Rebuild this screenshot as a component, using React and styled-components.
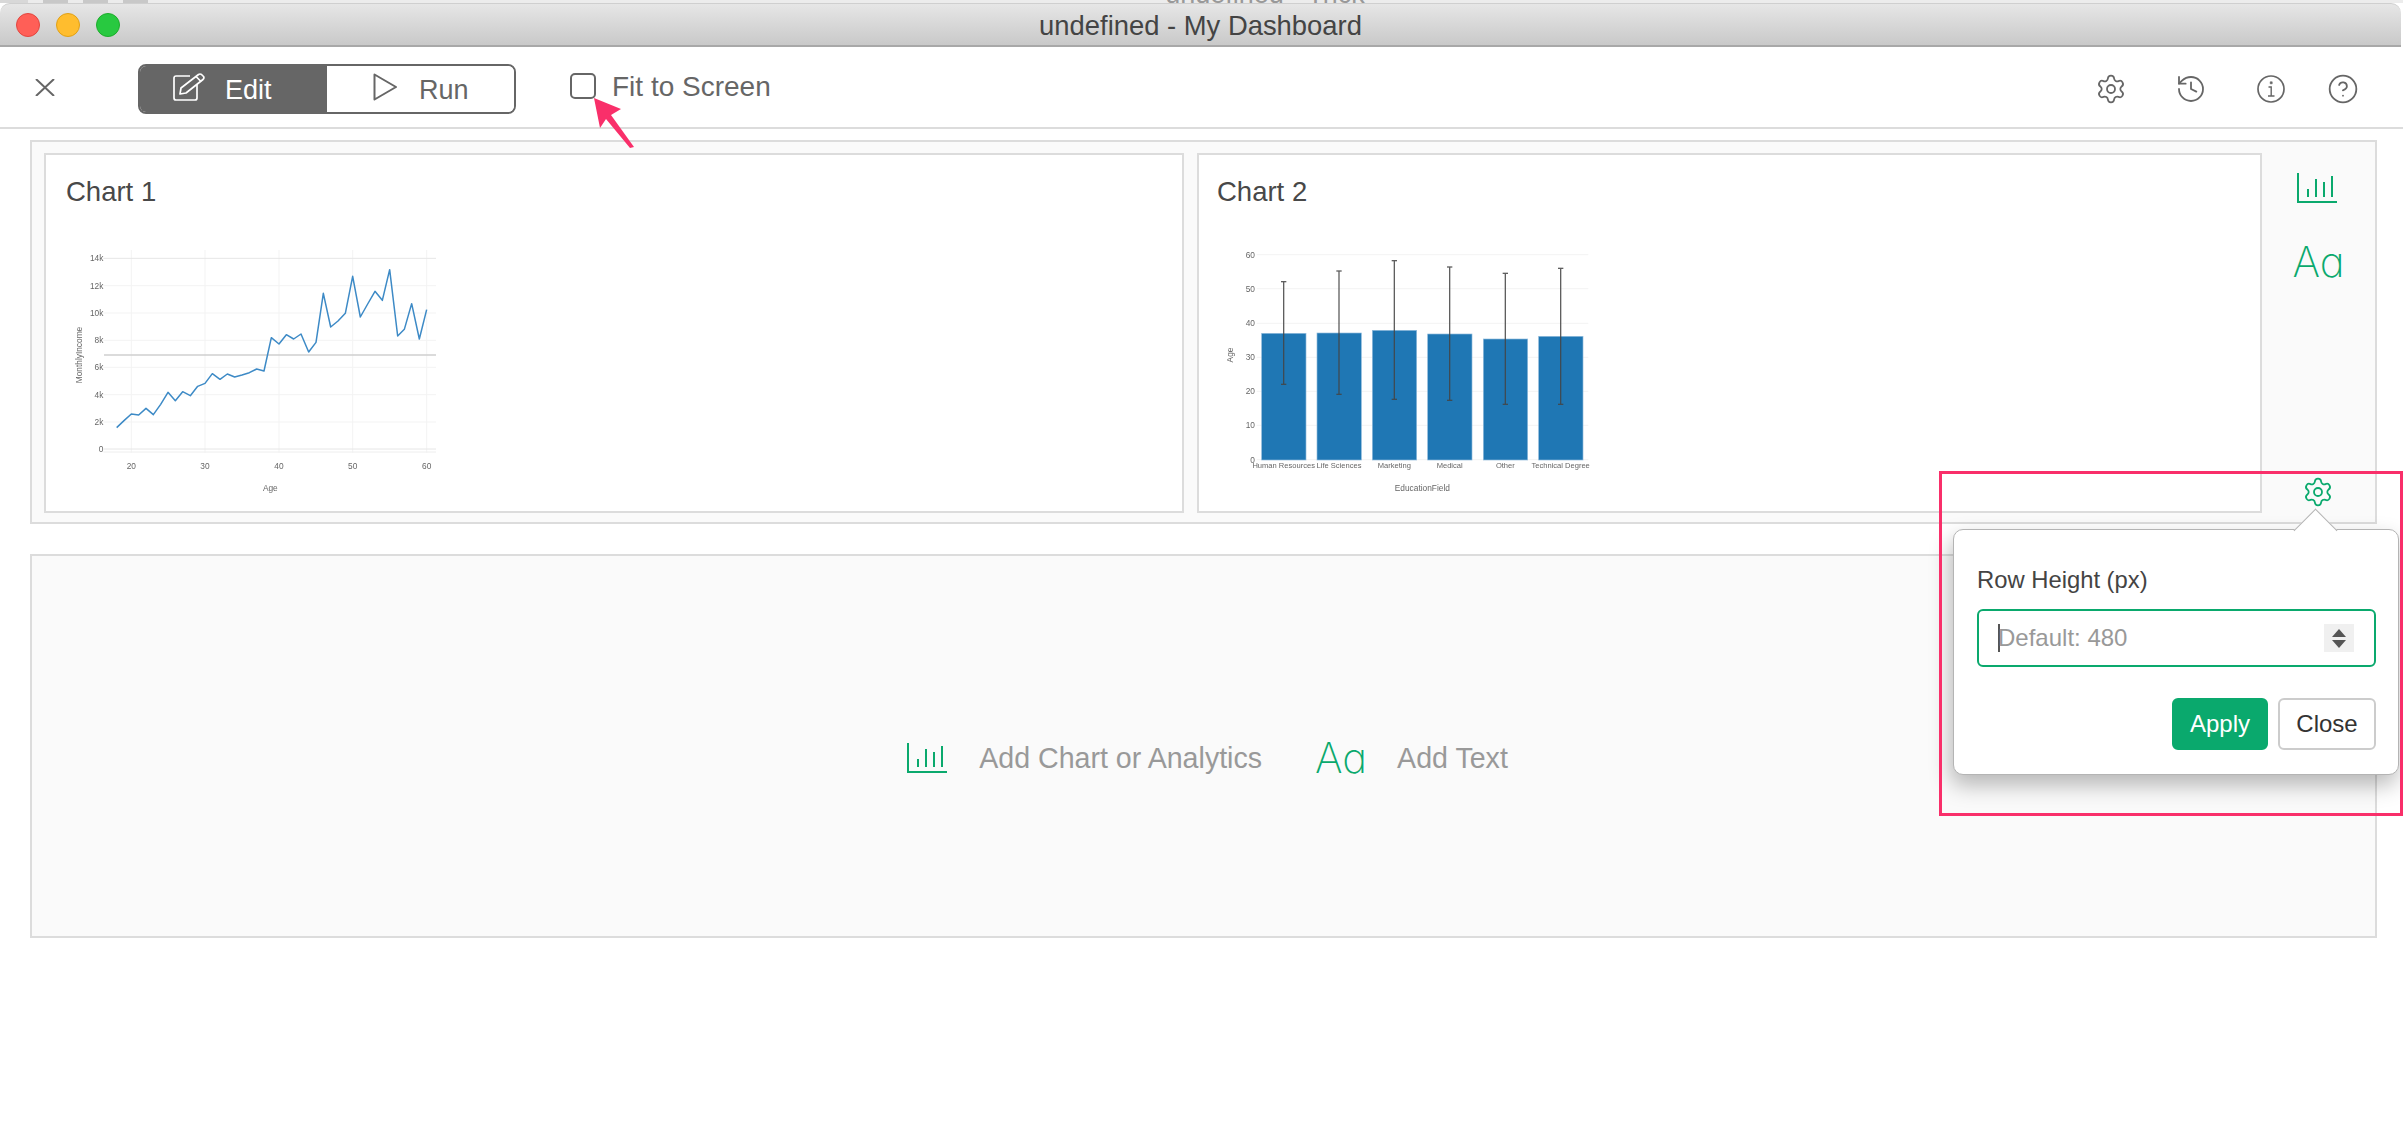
import React from 'react';
import styled, { createGlobalStyle } from 'styled-components';
import { Settings, History, CircleHelp } from 'lucide-react';

const GREEN = '#0aa96d';
const PINK = '#f92f6a';
const LINE = '#dcdcdc';

const GlobalStyle = createGlobalStyle`
  html, body {
    margin: 0;
    background: #fff;
    font-family: "Liberation Sans", Arial, sans-serif;
  }
`;

const Page = styled.div`
  position: relative;
  width: 2403px;
  height: 1124px;
  overflow: hidden;
  background: #fff;
`;

const BackWindow = styled.div`
  height: 3px;
  overflow: hidden;
  display: flex;
  justify-content: center;
  align-items: flex-end;
  padding-left: 127px;
  background: linear-gradient(
    to right,
    #d8d8d8 28px,
    #ececec 28px 43px,
    #c8c8c8 43px 68px,
    #ececec 68px 83px,
    #c8c8c8 83px 108px,
    #ececec 108px 123px,
    #c8c8c8 123px 148px,
    #ececec 148px
  );
`;

const BackTitle = styled.span`
  font-size: 27px;
  line-height: 27px;
  color: #999;
  margin-bottom: -5px;
`;

const TitleBar = styled.div`
  height: 44px;
  box-sizing: border-box;
  display: grid;
  grid-template-columns: 1fr auto 1fr;
  align-items: center;
  padding: 0 16px;
  background: linear-gradient(#e6e6e6, #c9c9c9);
  border-top: 1px solid #cfcfcf;
  border-bottom: 2px solid #a8a8a8;
  border-radius: 10px 10px 0 0;
  margin-right: 2px;
`;

const Lights = styled.div`
  display: flex;
  gap: 16px;
`;

const Light = styled.span`
  width: 24px;
  height: 24px;
  border-radius: 50%;
  box-sizing: border-box;
  background: ${(props) => props.color};
  border: 1px solid ${(props) => props.edge};
`;

const WindowTitle = styled.div`
  font-size: 27.4px;
  color: #444;
  margin-top: 3px;
`;

const Toolbar = styled.div`
  height: 82px;
  box-sizing: border-box;
  display: flex;
  align-items: center;
  padding: 3px 44px 0 35px;
  border-bottom: 2px solid ${LINE};
`;

const CloseIcon = styled.svg`
  width: 20px;
  height: 17px;
  margin: -2px 83px 0 0;
`;

const Segment = styled.div`
  width: 378px;
  height: 50px;
  box-sizing: border-box;
  display: flex;
  border: 2px solid #666;
  border-radius: 8px;
  overflow: hidden;
  margin-right: 54px;
`;

const SegmentTab = styled.div`
  display: flex;
  align-items: center;
  box-sizing: border-box;
  width: 188px;
  padding-left: ${(props) => (props.$active ? '33px' : '46px')};
  gap: ${(props) => (props.$active ? '20px' : '22px')};
  background: ${(props) => (props.$active ? '#666' : '#fff')};
  color: ${(props) => (props.$active ? '#fff' : '#666')};
  font-size: 27px;
`;

const TabGlyph = styled.svg`
  margin-top: -3px;
  flex: none;
`;

const TabLabel = styled.span`
  margin-top: 4px;
`;

const FitOption = styled.label`
  position: relative;
  display: flex;
  align-items: center;
  gap: 16px;
  font-size: 28px;
  color: #666;
  margin-top: -4px;
`;

const CheckBox = styled.span`
  width: 26px;
  height: 26px;
  box-sizing: border-box;
  border: 2px solid #666;
  border-radius: 5px;
  margin-top: -2px;
`;

const CalloutArrow = styled.svg`
  position: absolute;
  left: 20px;
  top: 25px;
  width: 50px;
  height: 60px;
`;

const ToolbarIcons = styled.div`
  margin-left: auto;
  display: flex;
  align-items: center;
  color: #666;

  & > svg {
    margin-left: 48px;
  }

  & > svg:last-child {
    margin-left: 40px;
  }
`;

const Content = styled.div`
  display: flex;
  flex-direction: column;
  gap: 30px;
  padding: 11px 26px 0 30px;
`;

const RowBox = styled.div`
  height: 384px;
  box-sizing: border-box;
  border: 2px solid ${LINE};
  background: #fafafa;
`;

const ChartRow = styled(RowBox)`
  display: flex;
  gap: 13px;
  padding: 11px 0 9px 12px;
`;

const ChartCard = styled.div`
  width: ${(props) => props.$width}px;
  flex: none;
  box-sizing: border-box;
  border: 2px solid ${LINE};
  background: #fff;
  padding: 21px 0 0 ${(props) => props.$padLeft}px;
`;

const ChartTitle = styled.div`
  font-size: 27.5px;
  line-height: 32px;
  color: #484848;
`;

const ChartPicture = styled.svg`
  display: block;
  width: ${(props) => props.$w}px;
  height: 272px;
  margin: 22px 0 0 ${(props) => props.$shift}px;
  filter: blur(0.35px);
  font-family: "Liberation Sans", Arial, sans-serif;
`;

const SideTools = styled.div`
  flex: 1;
  display: flex;
  flex-direction: column;
  align-items: center;
  margin-left: -13px;
  padding: 20px 4px 0 0;
`;

const BarsIcon = styled.svg`
  width: 40px;
  height: 30px;
  display: block;
  flex: none;
`;

const AaMark = styled.span`
  font-family: Inter, "Liberation Sans", sans-serif;
  font-feature-settings: 'cv11';
  font-weight: 250;
  font-size: 42px;
  line-height: 34px;
  color: ${GREEN};
`;

const SideAa = styled(AaMark)`
  margin: 42px 0 0 4px;
`;

const RowGear = styled.div`
  margin: auto 0 5px 2px;
  display: flex;
  color: ${GREEN};
`;

const EmptyRow = styled(RowBox)`
  display: flex;
  align-items: center;
  justify-content: center;
  padding: 24px 0 0 8px;
  font-size: 28.6px;
  color: #999;
`;

const AddLabel = styled.span`
  margin: ${(props) => (props.$last ? '0 0 0 30px' : '0 53px 0 32px')};
`;

const Popover = styled.div`
  position: absolute;
  left: 1953px;
  top: 529px;
  width: 446px;
  box-sizing: border-box;
  padding: 37px 22px 24px 23px;
  background: #fff;
  border: 1px solid #b4b4b4;
  border-radius: 10px;
  box-shadow: -2px 10px 22px rgba(0, 0, 0, 0.28);

  &::before {
    content: '';
    position: absolute;
    left: 346px;
    top: -15px;
    width: 30px;
    height: 30px;
    background: #fff;
    border-top: 1px solid #b4b4b4;
    border-left: 1px solid #b4b4b4;
    transform: rotate(45deg);
  }
`;

const FieldLabel = styled.div`
  font-size: 23.8px;
  line-height: 26px;
  color: #444;
  margin-bottom: 16px;
`;

const Field = styled.div`
  height: 58px;
  box-sizing: border-box;
  display: flex;
  align-items: center;
  border: 2px solid ${GREEN};
  border-radius: 6px;
  padding: 0 20px 0 19px;
  margin-bottom: 31px;
`;

const Caret = styled.span`
  width: 2px;
  height: 28px;
  background: #555;
  flex: none;
`;

const NumberInput = styled.input`
  flex: 1;
  min-width: 0;
  border: none;
  outline: none;
  padding: 0;
  margin-left: -2px;
  font-family: inherit;
  font-size: 24px;
  color: #333;
  background: transparent;

  &::placeholder {
    color: #999;
    opacity: 1;
  }
`;

const Spinner = styled.div`
  width: 30px;
  height: 28px;
  flex: none;
  display: flex;
  flex-direction: column;
  align-items: center;
  justify-content: center;
  gap: 3px;
  background: #f0f0f0;
`;

const SpinArrow = styled.span`
  width: 0;
  height: 0;
  border-left: 7px solid transparent;
  border-right: 7px solid transparent;
  border-bottom: ${(props) => (props.$down ? 'none' : '8px solid #555')};
  border-top: ${(props) => (props.$down ? '8px solid #555' : 'none')};
`;

const PopoverActions = styled.div`
  display: flex;
  justify-content: flex-end;
  gap: 10px;
`;

const PopoverButton = styled.button`
  height: 52px;
  box-sizing: border-box;
  font-family: inherit;
  font-size: 24px;
  border-radius: 6px;
  padding: 0;
  width: ${(props) => (props.$primary ? '96px' : '98px')};
  color: ${(props) => (props.$primary ? '#fff' : '#333')};
  background: ${(props) => (props.$primary ? GREEN : '#fff')};
  border: 2px solid ${(props) => (props.$primary ? GREEN : '#ccc')};
`;

const HighlightFrame = styled.div`
  position: absolute;
  left: 1939px;
  top: 471px;
  width: 464px;
  height: 345px;
  box-sizing: border-box;
  border: 3px solid ${PINK};
  pointer-events: none;
`;

const incomePoints = [
  [230, 803], [252, 782], [274, 762], [296, 765], [318, 745], [340, 764], [362, 733], [384, 697],
  [406, 722], [428, 695], [451, 707], [473, 679], [495, 670], [517, 641], [540, 658], [562, 642],
  [584, 651], [606, 645], [628, 638], [650, 627], [672, 633], [694, 533], [717, 552], [739, 524],
  [761, 537], [783, 522], [806, 576], [828, 547], [850, 400], [872, 501], [894, 483], [916, 460],
  [938, 349], [961, 471], [983, 432], [1005, 394], [1027, 421], [1049, 329], [1073, 528], [1093, 508],
  [1115, 431], [1138, 537], [1160, 449],
];

// coordinates below are in 3x units, measured from the chart's own corner
const LineChart = () => {
  const yTicks = [
    ['14k', 295], ['12k', 377], ['10k', 459], ['8k', 541], ['6k', 622], ['4k', 704], ['2k', 786], ['0', 867],
  ];
  const xTicks = [['20', 274], ['30', 495], ['40', 717], ['50', 938], ['60', 1160]];
  return (
    <ChartPicture $w={440} $shift={-26} viewBox="0 210 1320 816">
      {xTicks.map(([label, x]) => (
        <line key={label} x1={x} x2={x} y1="270" y2="878" stroke="#f3f3f3" strokeWidth="3" />
      ))}
      {yTicks.map(([label, y]) => (
        <line
          key={label}
          x1="190"
          x2="1188"
          y1={y}
          y2={y}
          stroke={label === '14k' || label === '0' ? '#e6e6e6' : '#f3f3f3'}
          strokeWidth="3"
        />
      ))}
      <line x1="190" x2="1188" y1="876" y2="876" stroke="#eee" strokeWidth="3" />
      <line x1="192" x2="1188" y1="585" y2="585" stroke="#cfcfcf" strokeWidth="4" />
      <polyline
        points={incomePoints.map((p) => p.join(',')).join(' ')}
        fill="none"
        stroke="#3d8ac6"
        strokeWidth="4.5"
        strokeLinejoin="round"
      />
      <g fontSize="25" fill="#666">
        {yTicks.map(([label, y]) => (
          <text key={label} x="190" y={y + 9} textAnchor="end">{label}</text>
        ))}
        {xTicks.map(([label, x]) => (
          <text key={label} x={x} y="926" textAnchor="middle">{label}</text>
        ))}
        <text x="691" y="994" textAnchor="middle">Age</text>
        <text transform="translate(125 585) rotate(-90)" textAnchor="middle">MonthlyIncome</text>
      </g>
    </ChartPicture>
  );
};

const ageBars = [
  { label: 'Human Resources', x: 185, top: 520, low: 673, high: 365 },
  { label: 'Life Sciences', x: 351, top: 519, low: 703, high: 333 },
  { label: 'Marketing', x: 517, top: 511, low: 718, high: 302 },
  { label: 'Medical', x: 683, top: 522, low: 721, high: 321 },
  { label: 'Other', x: 850, top: 537, low: 733, high: 340 },
  { label: 'Technical Degree', x: 1016, top: 529, low: 733, high: 325 },
];

const BarChart = () => {
  const yTicks = [['60', 284], ['50', 386], ['40', 490], ['30', 592], ['20', 694], ['10', 796], ['0', 899]];
  return (
    <ChartPicture $w={420} $shift={-17} viewBox="0 210 1260 816">
      {yTicks.map(([label, y]) => (
        <line key={label} x1="170" x2="1165" y1={y} y2={y} stroke="#f3f3f3" strokeWidth="3" />
      ))}
      {ageBars.map((b) => {
        const cx = b.x + 66;
        return (
          <g key={b.label}>
            <rect x={b.x} y={b.top} width="133" height={900 - b.top} fill="#1f77b4" stroke="#8fbbdc" strokeWidth="2" />
            <g stroke="#444" strokeWidth="4" opacity="0.85">
              <line x1={cx} x2={cx} y1={b.high} y2={b.low} />
              <line x1={cx - 8} x2={cx + 8} y1={b.high} y2={b.high} />
              <line x1={cx - 8} x2={cx + 8} y1={b.low} y2={b.low} />
            </g>
          </g>
        );
      })}
      <g fontSize="25" fill="#666">
        {yTicks.map(([label, y]) => (
          <text key={label} x="165" y={y + 9} textAnchor="end">{label}</text>
        ))}
        {ageBars.map((b) => (
          <text key={b.label} x={b.x + 66} y="925" textAnchor="middle" fontSize="22.7">
            {b.label}
          </text>
        ))}
        <text x="667" y="994" textAnchor="middle">EducationField</text>
        <text transform="translate(100 585) rotate(-90)" textAnchor="middle">Age</text>
      </g>
    </ChartPicture>
  );
};

const AddChartIcon = () => (
  <BarsIcon viewBox="0 0 40 30" fill="none" stroke={GREEN} strokeWidth="2">
    <path d="M1 0V29H40" />
    <path d="M11 16V24M19 6V24M27 9V24M35 3V24" />
  </BarsIcon>
);

const App = () => {
  return (
    <Page>
      <GlobalStyle />
      <BackWindow>
        <BackTitle>undefined - Trick</BackTitle>
      </BackWindow>
      <TitleBar>
        <Lights>
          <Light color="#ff5f57" edge="#e2463f" />
          <Light color="#ffbd2e" edge="#e1a116" />
          <Light color="#28c940" edge="#1dad2b" />
        </Lights>
        <WindowTitle>undefined - My Dashboard</WindowTitle>
      </TitleBar>
      <Toolbar>
        <CloseIcon viewBox="0 0 20 17" fill="none" stroke="#666" strokeWidth="2">
          <path d="M1 0L19 17M19 0L1 17" />
        </CloseIcon>
        <Segment>
          <SegmentTab $active>
            <TabGlyph width="32" height="28" viewBox="0 0 32 28" fill="none" stroke="#fff" strokeWidth="1.7">
              <path d="M17 3H3A2 2 0 0 0 1 5V25A2 2 0 0 0 3 27H22A2 2 0 0 0 24 25V11" />
              <path d="M7 21L8 15L25.5 1.5Q27 0.5 28.5 1.5L30.5 3.5Q31.5 5 30 6.5L13 20Z" strokeLinejoin="round" />
              <path d="M23 3.5L28 8.5" />
            </TabGlyph>
            <TabLabel>Edit</TabLabel>
          </SegmentTab>
          <SegmentTab>
            <TabGlyph width="24" height="28" viewBox="0 0 24 28" fill="none" stroke="#666" strokeWidth="2">
              <path d="M1.5 1.5L23 14L1.5 26.5Z" strokeLinejoin="round" />
            </TabGlyph>
            <TabLabel>Run</TabLabel>
          </SegmentTab>
        </Segment>
        <FitOption>
          <CheckBox />
          Fit to Screen
          <CalloutArrow viewBox="0 0 50 60">
            <path d="M4 2L31 13L21 19L44 51L40 52L16 23L10 32Z" fill={PINK} />
          </CalloutArrow>
        </FitOption>
        <ToolbarIcons>
          <Settings size={32} strokeWidth={1.35} />
          <History size={32} strokeWidth={1.35} />
          <svg width="32" height="32" viewBox="0 0 32 32" fill="none" stroke="currentColor" strokeWidth="1.7">
            <circle cx="16" cy="16" r="13" />
            <path d="M13.5 14H16.2V23M13 23H19.5" strokeWidth="1.4" />
            <path d="M15.2 8.8H17.2V10.8H15.2Z" fill="currentColor" strokeWidth="0.6" />
          </svg>
          <CircleHelp size={32} strokeWidth={1.35} />
        </ToolbarIcons>
      </Toolbar>
      <Content>
        <ChartRow>
          <ChartCard $width={1140} $padLeft={20}>
            <ChartTitle>Chart 1</ChartTitle>
            <LineChart />
          </ChartCard>
          <ChartCard $width={1065} $padLeft={18}>
            <ChartTitle>Chart 2</ChartTitle>
            <BarChart />
          </ChartCard>
          <SideTools>
            <AddChartIcon />
            <SideAa>Aa</SideAa>
            <RowGear>
              <Settings size={32} strokeWidth={1.35} />
            </RowGear>
          </SideTools>
        </ChartRow>
        <EmptyRow>
          <AddChartIcon />
          <AddLabel>Add Chart or Analytics</AddLabel>
          <AaMark>Aa</AaMark>
          <AddLabel $last>Add Text</AddLabel>
        </EmptyRow>
      </Content>
      <Popover>
        <FieldLabel>Row Height (px)</FieldLabel>
        <Field>
          <Caret />
          <NumberInput placeholder="Default: 480" />
          <Spinner>
            <SpinArrow />
            <SpinArrow $down />
          </Spinner>
        </Field>
        <PopoverActions>
          <PopoverButton $primary>Apply</PopoverButton>
          <PopoverButton>Close</PopoverButton>
        </PopoverActions>
      </Popover>
      <HighlightFrame />
    </Page>
  );
};

export default App;
